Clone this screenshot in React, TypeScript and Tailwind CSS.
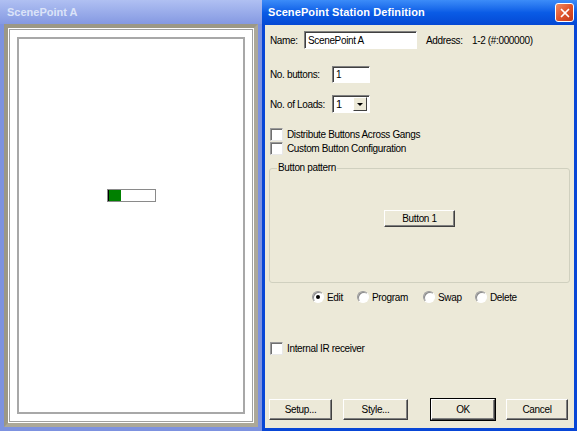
import { X } from "lucide-react";

const font = { fontFamily: "'Liberation Sans', Arial, sans-serif" };

function Check({ label }: { label: string }) {
  return (
    <div className="flex items-center h-[13px]">
      <span className="w-[13px] h-[13px] bg-white border border-[#9a9a9a] border-b-[#e8e8e8] border-r-[#e8e8e8] shadow-[inset_1px_1px_0_#6f6f6f]" />
      <span className="ml-[4px]">{label}</span>
    </div>
  );
}

function Radio({ label, on, w }: { label: string; on?: boolean; w: string }) {
  return (
    <div className={`flex items-center ${w}`}>
      <span className="w-[12px] h-[12px] rounded-full bg-white border border-[#9a9a9a] border-b-white border-r-white shadow-[inset_1px_1px_0_#8a8a8a] flex items-center justify-center">
        {on && <span className="w-[4px] h-[4px] rounded-full bg-black" />}
      </span>
      <span className="ml-[3px]">{label}</span>
    </div>
  );
}

function Btn({ label, w, def }: { label: string; w: string; def?: boolean }) {
  return (
    <div
      className={`${w} h-[21px] flex items-center justify-center bg-[#ece9d8] ${
        def ? "outline outline-1 outline-black" : ""
      } border border-white border-b-[#404040] border-r-[#404040] shadow-[inset_-1px_-1px_0_#808080]`}
    >
      {label}
    </div>
  );
}

export default function App() {
  return (
    <div
      className="w-[577px] h-[431px] flex text-[10px] tracking-[-0.35px] text-black overflow-hidden"
      style={font}
    >
      {/* inactive station window */}
      <div className="w-[262px] h-full flex flex-col bg-[#7d92e0] px-[4px] pb-[4px]">
        <div className="h-[24px] -mx-[4px] px-[7px] flex items-center bg-gradient-to-b from-[#b0c0f2] to-[#8599e2] text-[11px] font-bold tracking-normal text-[#dbe3f8]">
          ScenePoint A
        </div>
        <div className="flex-1 border-[4px] border-[#aca899] border-t-[#9c9886] border-l-[#9c9886] bg-white p-[1px]">
          <div className="h-full border border-[#a0a0a0] p-[7px]">
            <div className="h-full border-2 border-[#a8a8a8] flex justify-center pt-[150px]">
              <div className="w-[49px] h-[13px] flex border border-[#8a8a8a] bg-white">
                <div className="w-[13px] h-full bg-[#008000] border-l border-black" />
              </div>
            </div>
          </div>
        </div>
      </div>

      {/* station definition dialog */}
      <div className="w-[315px] h-full flex flex-col bg-[#0846d6] px-[3px] pb-[3px]">
        <div className="h-[25px] -mx-[3px] pl-[6px] pr-[3px] flex items-center justify-between bg-gradient-to-b from-[#3c8cf8] via-[#0a5ce6] to-[#0548d4] text-white text-[11px] font-bold tracking-[0.1px]">
          <span>ScenePoint Station Definition</span>
          <div className="w-[19px] h-[19px] rounded-[3px] border border-white bg-gradient-to-br from-[#f08a62] via-[#e0542c] to-[#c0391a] flex items-center justify-center">
            <X size={14} strokeWidth={3} className="text-white" />
          </div>
        </div>

        <div className="flex-1 flex flex-col bg-[#ece9d8] px-[4px] pt-[6px] pb-[8px]">
          <div className="flex items-center h-[18px] ml-[1px]">
            <span className="w-[34px]">Name:</span>
            <div className="w-[113px] h-[18px] bg-white border border-[#808080] border-b-white border-r-white shadow-[inset_1px_1px_0_#404040] flex items-center pl-[3px]">
              ScenePoint A
            </div>
            <span className="ml-[9px] w-[46px]">Address:</span>
            <span>1-2 (#:000000)</span>
          </div>

          <div className="flex items-center h-[17px] mt-[17px] ml-[1px]">
            <span className="w-[62px]">No. buttons:</span>
            <div className="w-[38px] h-[17px] bg-white border border-[#808080] border-b-white border-r-white shadow-[inset_1px_1px_0_#404040] flex items-center pl-[3px]">
              1
            </div>
          </div>

          <div className="flex items-center h-[18px] mt-[12px] ml-[1px]">
            <span className="w-[62px]">No. of Loads:</span>
            <div className="w-[38px] h-[18px] bg-white border border-[#808080] border-b-white border-r-white shadow-[inset_1px_1px_0_#404040] flex items-center justify-between pl-[3px] pr-[2px]">
              <span className="text-[11px]">1</span>
              <div className="w-[14px] h-[14px] bg-[#ece9d8] border border-white border-b-[#404040] border-r-[#404040] flex items-center justify-center">
                <span className="w-0 h-0 border-l-[3px] border-r-[3px] border-t-[3px] border-l-transparent border-r-transparent border-t-black" />
              </div>
            </div>
          </div>

          <div className="mt-[15px] ml-[1px]">
            <Check label="Distribute Buttons Across Gangs" />
          </div>
          <div className="mt-[1px] ml-[1px]">
            <Check label="Custom Button Configuration" />
          </div>

          <fieldset className="mt-[7px] h-[121px] border border-[#d0d0bf] rounded-[3px] px-[4px]">
            <legend className="ml-[3px] px-[1px] leading-[12px]">Button pattern</legend>
            <div className="flex justify-center pt-[36px]">
              <div className="w-[71px] h-[17px] flex items-center justify-center bg-[#ece9d8] border border-white border-b-[#404040] border-r-[#404040] shadow-[inset_-1px_-1px_0_#808080]">
                Button 1
              </div>
            </div>
          </fieldset>

          <div className="flex items-center h-[12px] mt-[8px] pl-[43px]">
            <Radio label="Edit" on w="w-[45px]" />
            <Radio label="Program" w="w-[66px]" />
            <Radio label="Swap" w="w-[52px]" />
            <Radio label="Delete" w="w-[50px]" />
          </div>

          <div className="mt-[39px] ml-[1px]">
            <Check label="Internal IR receiver" />
          </div>

          <div className="mt-auto flex items-center">
            <Btn label="Setup..." w="w-[63px]" />
            <div className="ml-[11px]">
              <Btn label="Style..." w="w-[65px]" />
            </div>
            <div className="ml-[23px]">
              <Btn label="OK" w="w-[64px]" def />
            </div>
            <div className="ml-[11px]">
              <Btn label="Cancel" w="w-[62px]" />
            </div>
          </div>
        </div>
      </div>
    </div>
  );
}
